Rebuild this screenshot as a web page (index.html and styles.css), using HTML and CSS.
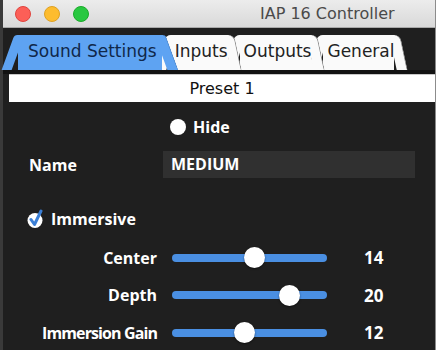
FILE: index.html
```html
<!DOCTYPE html>
<html lang="en">
<head>
    <meta charset="UTF-8">
    <meta name="viewport" content="width=device-width, initial-scale=1.0">
    <title>IAP 16 Controller</title>
    <link rel="stylesheet" href="styles.css">
</head>
<body>
    <div class="window">
      <div class="titleBar">
        <div class="lights">
          <span class="light red"></span>
          <span class="light yellow"></span>
          <span class="light green"></span>
        </div>
        <div class="title">IAP 16 Controller</div>
      </div>

      <div class="tabBar">
        <div class="tab active">Sound Settings</div>
        <div class="tab">Inputs</div>
        <div class="tab">Outputs</div>
        <div class="tab">General</div>
      </div>

      <div class="presetBar">Preset 1</div>

      <div class="panel">
        <div class="hideRow">
          <span class="radio"></span>
          <span class="bold">Hide</span>
        </div>

        <div class="nameRow">
          <span class="bold nameLabel">Name</span>
          <div class="nameField">MEDIUM</div>
        </div>

        <div class="checkRow">
          <svg class="checkIcon" width="18" height="20" viewBox="0 0 18 20">
            <circle cx="8" cy="11.5" r="7.5" fill="#fff"/>
            <path d="M4 10.5 L7.5 15.5 L14 2" fill="none" stroke="#3b7fd6" stroke-width="3" stroke-linecap="round" stroke-linejoin="round"/>
          </svg>
          <span class="bold">Immersive</span>
        </div>

        <!-- スライダー -->
        <div class="sliders">
          <div class="sliderRow">
            <span class="bold sliderLabel">Center</span>
            <div class="track"><span class="thumb" style="left: 53.5%"></span></div>
            <span class="bold value">14</span>
          </div>
          <div class="sliderRow">
            <span class="bold sliderLabel">Depth</span>
            <div class="track"><span class="thumb" style="left: 75.5%"></span></div>
            <span class="bold value">20</span>
          </div>
          <div class="sliderRow">
            <span class="bold sliderLabel narrow">Immersion Gain</span>
            <div class="track"><span class="thumb" style="left: 46.5%"></span></div>
            <span class="bold value">12</span>
          </div>
        </div>
      </div>
    </div>
</body>
</html>
```

FILE: styles.css
```css
body {
  margin: 0;
  background: #3a3a3a;
  font-family: "DejaVu Sans", "Open Sans", sans-serif;
  overflow: hidden;
}
.window {
  margin-left: 3px;
  height: 350px;
  width: 432px;
  background: #1f1f1f;
  border-right: 1px solid #8c8c8c;
}
.titleBar {
  height: 28px;
  display: flex;
  align-items: center;
  background: linear-gradient(#ececec, #d9d9d9);
  border-bottom: 1px solid #a9a9a9;
  box-sizing: border-box;
}
.lights {
  display: flex;
  gap: 13px;
  padding-left: 12px;
}
.light {
  width: 14px;
  height: 14px;
  border-radius: 50%;
}
.red {
  background: #fc5f57;
  border: 0.5px solid #e0443e;
}
.yellow {
  background: #fdbc2e;
  border: 0.5px solid #dea123;
}
.green {
  background: #28c840;
  border: 0.5px solid #1aab29;
}
.title {
  margin-left: 171px;
  font-size: 16px;
  color: #4a4a4a;
}
.tabBar {
  display: flex;
  padding: 7px 0 0 0;
  height: 35px;
  border-bottom: 4px solid #121212;
}
.tab {
  position: relative;
  height: 35px;
  line-height: 33px;
  padding: 0 0 0 4px;
  margin-left: 12px;
  font-size: 17px;
  color: #222;
  background: #fafafa;
}
.tab::before,
.tab::after {
  content: "";
  position: absolute;
  top: 0;
  width: 10px;
  height: 100%;
  background: inherit;
  z-index: -1;
}
.tab::before {
  left: -10px;
  transform: skewX(-15deg);
  border-top-left-radius: 5px;
}
.tab::after {
  right: -10px;
  transform: skewX(12deg);
  border-top-right-radius: 6px;
  border-right: 1px solid #8a8a8a;
}
.tab:nth-child(1) { z-index: 4; }
.tab:nth-child(2) { z-index: 3; margin-left: 9px; }
.tab:nth-child(3) { z-index: 2; }
.tab:nth-child(4) { z-index: 1; }
.tab.active {
  margin-left: 15px;
  padding: 0 5px 0 10px;
  background: #5ea3f2;
  color: #10284a;
}
.tab.active::before {
  transform: skewX(-20deg);
  border-top-left-radius: 3px;
}
.tab.active::after {
  transform: skewX(20deg);
  border-top-right-radius: 3px;
  border-right-color: #4a86cc;
}
.presetBar {
  margin-left: 6px;
  height: 27px;
  background: #fff;
  text-align: center;
  font-size: 16px;
  line-height: 27px;
  color: #111;
  border-top: 1px solid #c8c8c8;
}
.panel {
  color: #fff;
  font-family: "Open Sans", "DejaVu Sans", sans-serif;
}
.bold {
  font-weight: 700;
  font-size: 16px;
}
.narrow {
  letter-spacing: -0.9px;
}
.hideRow {
  display: flex;
  align-items: center;
  gap: 7px;
  padding: 14px 0 0 167px;
}
.radio {
  width: 16px;
  height: 16px;
  border-radius: 50%;
  background: #fff;
}
.nameRow {
  display: flex;
  align-items: center;
  margin-top: 13px;
}
.nameLabel {
  width: 134px;
  padding-left: 26px;
}
.nameField {
  width: 252px;
  height: 27px;
  line-height: 27px;
  background: #303030;
  padding-left: 8px;
  box-sizing: border-box;
  font-weight: 700;
  font-size: 16px;
}
.checkRow {
  display: flex;
  align-items: center;
  gap: 6px;
  padding: 30px 0 0 24px;
}
.sliders {
  margin-top: 16px;
  display: flex;
  flex-direction: column;
  gap: 15px;
}
.sliderRow {
  display: grid;
  grid-template-columns: 154px 155px 58px;
  column-gap: 15px;
  align-items: center;
  height: 22.5px;
}
.sliderLabel {
  text-align: right;
}
.value {
  padding-left: 22px;
  font-size: 17px;
}
.track {
  position: relative;
  height: 8px;
  border-radius: 4px;
  background: #4a8fe2;
}
.thumb {
  position: absolute;
  top: 50%;
  width: 21px;
  height: 21px;
  margin: -10.5px 0 0 -10.5px;
  border-radius: 50%;
  background: #fff;
  box-shadow: 0 1px 2px rgba(0, 0, 0, 0.5);
}
```
